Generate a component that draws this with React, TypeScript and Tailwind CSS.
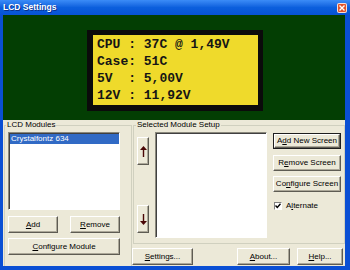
import React from 'react';

const font = { fontFamily: '"Liberation Sans", Arial, sans-serif' };

function Btn({ children, className = '' }: { children: React.ReactNode; className?: string }) {
  return (
    <div
      className={`flex shrink-0 items-center justify-center border border-t-white border-l-white border-r-[#5e5c53] border-b-[#5e5c53] bg-[#ece9d8] text-[8px] leading-none text-black shadow-[inset_-1px_-1px_0_#aca899] ${className}`}
    >
      {children}
    </div>
  );
}

function Arrow({ up }: { up?: boolean }) {
  return (
    <svg width="7" height="11" viewBox="0 0 7 11" className={up ? '' : 'rotate-180'}>
      <path d="M3.5 0 L7 4 L4.2 4 L4.2 11 L2.8 11 L2.8 4 L0 4 Z" fill="#4a0606" />
    </svg>
  );
}

export default function App() {
  return (
    <div className="flex h-[270px] w-[350px] flex-col overflow-hidden bg-[#0a4fd4]" style={font}>
      {/* Title bar */}
      <div className="flex h-[15px] shrink-0 items-center justify-between bg-gradient-to-b from-[#3b8cf7] via-[#0b5fdd] to-[#0752d6] pl-[3px] pr-[3px]">
        <span className="text-[8.5px] font-bold leading-none text-white [text-shadow:1px_1px_0_#0a2f8a]">LCD Settings</span>
        <div className="mt-[1px] flex h-[10px] w-[10px] items-center justify-center rounded-[2px] border border-white/80 bg-[#e0532c]">
          <svg width="6" height="6" viewBox="0 0 6 6">
            <path d="M0.5 0.5 L5.5 5.5 M5.5 0.5 L0.5 5.5" stroke="white" strokeWidth="1.4" />
          </svg>
        </div>
      </div>

      <div className="ml-[3px] mr-[5px] flex h-[251px] shrink-0 flex-col overflow-hidden">
        {/* LCD preview */}
        <div className="h-[105px] shrink-0 bg-[#033e03] pl-[84px] pt-[15px]">
          <div className="h-[81px] w-[176px] border-[5px] border-l-[6px] border-b-[6px] border-[#0b0b0b] bg-[#efda2b] pl-[4px] pt-[1px]">
            <pre
              className="text-[13px] font-bold leading-[17px] text-[#151515]"
              style={{ fontFamily: '"Liberation Mono", "Courier New", monospace' }}
            >
{`CPU : 37C @ 1,49V
Case: 51C
5V  : 5,00V
12V : 11,92V`}
            </pre>
          </div>
        </div>

        {/* Settings panel */}
        <div className="flex h-[146px] shrink-0 bg-[#ece9d8] pl-[1px]">
          <fieldset className="h-[150px] w-[128px] shrink-0 border border-[#d0d0bf] pl-[3px]">
            <legend className="ml-[-2px] h-[10px] px-[1px] text-[8px] leading-[10px] text-black">LCD Modules</legend>
            <div className="mt-[2px] h-[78px] w-[112px] border border-t-[#8a887c] border-l-[#8a887c] border-r-white border-b-white bg-white shadow-[inset_1px_1px_0_#404040]">
              <div className="ml-[1px] mt-[1px] flex h-[10px] w-[109px] items-center bg-[#316ac5] pl-[1px] text-[8px] leading-none text-white">
                Crystalfontz 634
              </div>
            </div>
            <div className="mt-[6px] flex gap-[12px]">
              <Btn className="h-[17px] w-[50px]">
                <span><u>A</u>dd</span>
              </Btn>
              <Btn className="h-[17px] w-[50px]">
                <span><u>R</u>emove</span>
              </Btn>
            </div>
            <Btn className="mt-[5px] h-[17px] w-[112px]">
              <span><u>C</u>onfigure Module</span>
            </Btn>
          </fieldset>

          <div className="flex flex-1 flex-col">
            <fieldset className="ml-[1px] h-[124px] border border-[#d0d0bf] pl-[3px]">
              <legend className="ml-[-1px] h-[10px] px-[1px] text-[8px] leading-[10px] text-black">Selected Module Setup</legend>
              <div className="flex">
                <div className="mt-[7px] flex w-[12px] flex-col gap-[40px]">
                  <Btn className="h-[28px] w-[12px]">
                    <Arrow up />
                  </Btn>
                  <Btn className="h-[28px] w-[12px]">
                    <Arrow />
                  </Btn>
                </div>
                <div className="ml-[6px] mt-[2px] h-[106px] w-[112px] border border-t-[#8a887c] border-l-[#8a887c] border-r-white border-b-white bg-white shadow-[inset_1px_1px_0_#404040]" />
                <div className="ml-[6px] mt-[3px] flex flex-col">
                  <div className="h-[16px] w-[68px] border border-[#1e1e1e]">
                    <Btn className="h-[14px] w-[66px]">
                      <span>A<u>d</u>d New Screen</span>
                    </Btn>
                  </div>
                  <Btn className="mt-[6px] h-[16px] w-[68px]">
                    <span>R<u>e</u>move Screen</span>
                  </Btn>
                  <Btn className="mt-[5px] h-[16px] w-[68px]">
                    <span>Co<u>n</u>figure Screen</span>
                  </Btn>
                  <div className="ml-[1px] mt-[10px] flex items-center gap-[4px]">
                    <div className="flex h-[8px] w-[8px] items-center justify-center border border-t-[#808080] border-l-[#808080] border-r-white border-b-white bg-white">
                      <svg width="6" height="6" viewBox="0 0 6 6">
                        <path d="M0.5 2.5 L2.3 4.5 L5.5 0.8" fill="none" stroke="#000" strokeWidth="1.4" />
                      </svg>
                    </div>
                    <span className="text-[8px] leading-none text-black">A<u>l</u>ternate</span>
                  </div>
                </div>
              </div>
            </fieldset>
            <div className="mt-[4px] flex">
              <Btn className="h-[17px] w-[61px]">
                <span><u>S</u>ettings...</span>
              </Btn>
              <Btn className="ml-[44px] h-[17px] w-[53px]">
                <span><u>A</u>bout...</span>
              </Btn>
              <Btn className="ml-[7px] h-[17px] w-[46px]">
                <span><u>H</u>elp...</span>
              </Btn>
            </div>
          </div>
        </div>
      </div>
    </div>
  );
}
